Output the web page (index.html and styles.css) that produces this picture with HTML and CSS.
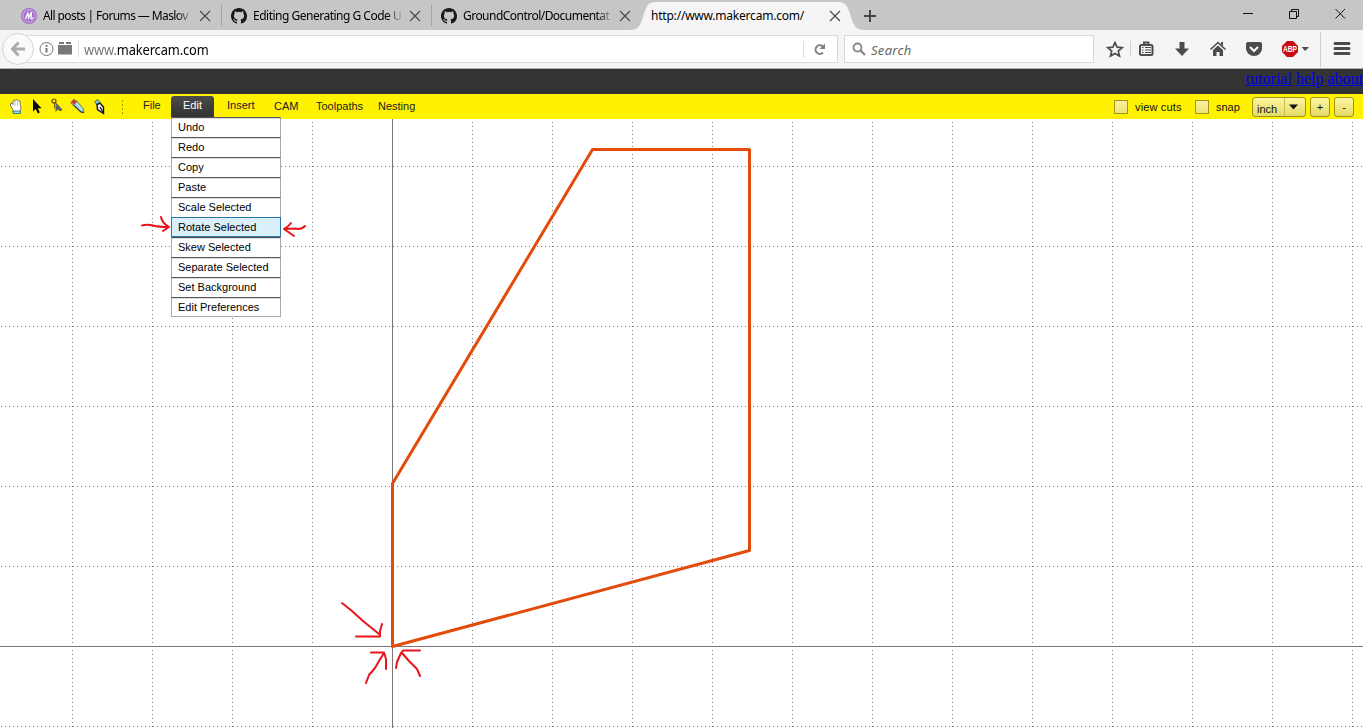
FILE: index.html
```html
<!DOCTYPE html>
<html lang="en">
<head>
<meta charset="utf-8">
<title>MakerCAM</title>
<link rel="stylesheet" href="styles.css">
</head>
<body>
<svg class="defs" width="0" height="0">
  <symbol id="x" viewBox="0 0 12 12"><path d="M1 1L11 11M11 1L1 11" stroke="#444" stroke-width="1.1" fill="none"/></symbol>
  <symbol id="gh" viewBox="0 0 16 16"><path fill="#191717" d="M8 0C3.58 0 0 3.58 0 8c0 3.54 2.29 6.53 5.47 7.59.4.07.55-.17.55-.38 0-.19-.01-.82-.01-1.49-2.01.37-2.53-.49-2.69-.94-.09-.23-.48-.94-.82-1.13-.28-.15-.68-.52-.01-.53.63-.01 1.08.58 1.23.82.72 1.21 1.87.87 2.33.66.07-.52.28-.87.51-1.07-1.78-.2-3.64-.89-3.64-3.95 0-.87.31-1.59.82-2.15-.08-.2-.36-1.02.08-2.12 0 0 .67-.21 2.2.82a7.6 7.6 0 0 1 4 0c1.53-1.04 2.2-.82 2.2-.82.44 1.1.16 1.92.08 2.12.51.56.82 1.27.82 2.15 0 3.07-1.87 3.75-3.65 3.95.29.25.54.73.54 1.48 0 1.07-.01 1.93-.01 2.2 0 .21.15.46.55.38A8 8 0 0 0 16 8c0-4.42-3.58-8-8-8z"/></symbol>
</svg>
<header class="tabs">
  <div class="tab tab-first">
    <svg width="16" height="16" viewBox="0 0 16 16"><circle cx="8" cy="8" r="8" fill="#a66fcb"/><circle cx="8" cy="8" r="6.2" fill="none" stroke="#dcc5eb" stroke-width=".8"/><path d="M4.500 11L7 4.500L7.500 10L10.500 4L10 10.500Q11 11.500 12 9.500" fill="none" stroke="#fff" stroke-width="1.300"/></svg>
    <span class="label t1">All posts | Forums — Maslov</span><svg class="close" width="12" height="12"><use href="#x"/></svg>
  </div>
  <div class="tab">
    <svg width="16" height="16"><use href="#gh"/></svg>
    <span class="label t2">Editing Generating G Code U</span><svg class="close" width="12" height="12"><use href="#x"/></svg>
  </div>
  <div class="tab">
    <svg width="16" height="16"><use href="#gh"/></svg>
    <span class="label t3">GroundControl/Documentat</span><svg class="close" width="12" height="12"><use href="#x"/></svg>
  </div>
  <div class="active">
    <svg class="shape" width="234" height="30" viewBox="0 0 234 30"><path d="M0 30C8 30 10 26 13 17C16 7 18 2 25 2H209C216 2 218 7 221 17C224 26 226 30 234 30Z" fill="#f5f5f5"/></svg>
    <span class="label t4">http://www.makercam.com/</span><svg class="close" width="12" height="12"><use href="#x"/></svg>
  </div>
  <svg class="plus" width="12" height="12"><path d="M6 0V12M0 6H12" stroke="#444" stroke-width="2"/></svg>
  <svg class="win" width="110" height="16" viewBox="0 0 110 16"><path d="M0 6.500H10" stroke="#111"/><path d="M46.500 4.500h7v7h-7zM48.500 4.500v-2h7v7h-2" fill="none" stroke="#111"/><path d="M92.500 2L102 11.500M102 2L92.500 11.500" stroke="#111"/></svg>
</header>
<nav class="nav">
  <div class="url">
    <svg width="67" height="27" viewBox="-5 0 67 27"><circle cx="24.500" cy="13" r="6.500" fill="none" stroke="#777"/><path d="M24.500 12v4.500M24.500 9v1.800" stroke="#666" stroke-width="1.800"/><path d="M36 9h14v9.500h-14zM37 6h5v2h-5zM44 6h5v2h-5z" fill="#777"/><path d="M56.500 4v17" stroke="#ddd"/></svg>
    <span class="addr"><i>www.</i>makercam.com</span>
    <svg class="reload" width="34" height="25" viewBox="0 0 34 25"><path d="M.5 4v17" stroke="#ddd"/><path d="M19.500 9.200A4.300 4.300 0 1 0 20 15.500" fill="none" stroke="#808080" stroke-width="2"/><path d="M22 6.500v5.500h-5.500z" fill="#808080"/></svg>
  </div>
  <svg class="back" width="34" height="34" viewBox="0 0 34 34"><circle cx="17" cy="17" r="15.500" fill="#fafafa" stroke="#d4d4d4"/><path d="M11.500 17H24M17.500 10.500L11.500 17L17.500 23.500" fill="none" stroke="#ababab" stroke-width="3"/></svg>
  <div class="search"><svg width="14" height="14" viewBox="0 0 14 14"><circle cx="5.500" cy="5.500" r="4" fill="none" stroke="#868686" stroke-width="1.800"/><path d="M8.500 8.500L13 13" stroke="#868686" stroke-width="2.300"/></svg><span>Search</span></div>
  <svg class="tools" width="269" height="38" viewBox="1094 30 269 38">
    <path d="M1115 42.500l2.100 4.700 5.100.5-3.900 3.400 1.200 5-4.500-2.600-4.500 2.600 1.200-5-3.900-3.400 5.100-.5z" fill="none" stroke="#4c4c4c" stroke-width="1.700"/>
    <path d="M1130.500 41v15M1320.500 32v35" stroke="#d0d0d0"/>
    <rect x="1140" y="45" width="12.500" height="10" rx="1.500" fill="none" stroke="#4c4c4c" stroke-width="2"/><path d="M1144 45V42.500h4.500V45" fill="none" stroke="#4c4c4c" stroke-width="2"/><path d="M1142 47.500h1.500M1142 50h1.500M1142 52.500h1.500M1145 47.500h6M1145 50h6M1145 52.500h6" stroke="#4c4c4c" stroke-width="1.200"/>
    <path d="M1179.500 42h5v6.500h4.500l-7 7.500-7-7.500h4.500z" fill="#4c4c4c"/>
    <path d="M1210.500 49.500L1218 42.500L1225.500 49.500" fill="none" stroke="#4c4c4c" stroke-width="1.600"/><path d="M1213 50l5-4.500 5 4.500v6h-3.500v-4h-3v4h-3.500zM1221 42h2v4l-2-1.500z" fill="#4c4c4c"/>
    <path d="M1248 42h12q2 0 2 2v4.500a8 7.500 0 0 1-16 0V44q0-2 2-2z" fill="#4c4c4c"/><path d="M1250 47l4 4 4-4" fill="none" stroke="#fff" stroke-width="2"/>
    <path d="M1287 41h6l5 5v6l-5 5h-6l-5-5v-6z" fill="#c70d12"/><text class="abp" x="1283" y="52" textLength="14" lengthAdjust="spacingAndGlyphs">ABP</text>
    <path d="M1301.500 47h7.500l-3.750 4z" fill="#4c4c4c"/>
    <path d="M1335 43.500h14M1335 48.500h14M1335 53.500h14" stroke="#4c4c4c" stroke-width="3" stroke-linecap="round"/>
  </svg>
</nav>
<div class="links"><a href="#">tutorial</a> <a href="#">help</a> <a href="#">about</a></div>
<div class="bar">
  <svg class="icons" width="130" height="25" viewBox="0 94 130 25">
    <path d="M13 112v-2.500l-2.500-3.500v-2.500l1.500-.5 1 1.500v-3.500l1.500-1 1 .5 1.500-1 1.500 1 1.500.5.500 5.500.5 2-1 3v1z" fill="#fff" stroke="#6c6a58" stroke-width=".9"/><path d="M13 111h7.500v2.500H13z" fill="#7fe0ea" stroke="#367" stroke-width=".8"/><path d="M15 101v5M17.500 101v5" stroke="#aaa" stroke-width=".7"/>
    <path d="M33 99v12.500l2.800-2.500 2 4.500 2-1-2-4.300H41.500z" fill="#080808"/>
    <path d="M54.500 102v6.500M54.500 102l5 5" stroke="#776600"/><path d="M55.500 102.500v9.500l2.500-2.500 1.500 1.500h2.500v-2z" fill="#666"/><circle cx="54" cy="101" r="2" fill="#ffe000" stroke="#5b5200" stroke-width="1.200"/>
    <path d="M71 102l2.500-2.500 3 1 7 8.500.5 3.500-3.500-.5-9-8z" fill="#8ed0da" stroke="#444" stroke-width=".6"/><path d="M76.500 103.500l5.500 6" stroke="#fff" stroke-width="1"/><path d="M71.500 102l2-2.200 3.500 2-3.200 3.200z" fill="#d5342b"/><path d="M73.500 105l7.500 7 3 .5" fill="none" stroke="#222" stroke-width="1"/>
    <path d="M94.500 102l3-2.500 2.500 3-2.500 2.500z" fill="#6fd1dd" stroke="#345" stroke-width=".8"/><path d="M97 104.500l3-1.500 3.500 4v6.500l-6-4z" fill="#eee" stroke="#111" stroke-width="1.400"/><path d="M100 107l3.500 6" stroke="#111" stroke-width="1.200"/>
    <path d="M122.500 100v14" stroke="#aa9c00" stroke-dasharray="2 2"/>
  </svg>
  <span class="m file">File</span><span class="m edit">Edit</span><span class="m insert">Insert</span><span class="m cam">CAM</span><span class="m tp">Toolpaths</span><span class="m nest">Nesting</span>
  <div class="opts">
    <b class="check"></b><span class="vc">view cuts</span><b class="check"></b><span class="snap">snap</span>
    <div class="combo"><span>inch</span><svg width="21" height="18"><path d="M.5 0v18" stroke="#c9bd5e"/><path d="M5 6.500h9l-4.500 5z" fill="#111"/></svg></div>
    <b class="btn">+</b><b class="btn">-</b>
  </div>
</div>
<main class="stage">
  <svg class="drawing" width="1363" height="609" viewBox="0 119 1363 609">
    <defs>
      <pattern id="v" x="72" y="120" width="80" height="4" patternUnits="userSpaceOnUse"><rect y="2" width="1" height="1" fill="#777"/></pattern>
      <pattern id="h" x="0" y="166" width="4" height="80" patternUnits="userSpaceOnUse"><rect x="1" width="1" height="1" fill="#777"/></pattern>
    </defs>
    <rect y="119" width="1363" height="609" fill="url(#v)"/><rect y="119" width="1363" height="609" fill="url(#h)"/>
    <path d="M392.500 119V728M0 646.500H1363" stroke="#777"/>
    <path d="M392.500 646.500V483.500L592.500 149.500H749.500V550.500Z" fill="none" stroke="#e24b0c" stroke-width="3" stroke-linejoin="round"/>
    <g fill="none" stroke="#e8151b" stroke-width="2" stroke-linecap="round" stroke-linejoin="round">
      <path d="M142 225.500Q147 224 153 225.500T169 227M161 217Q162 223 169 227L163 231"/>
      <path d="M305 226Q301 230 295 228.500L285 229M291 223Q288 227 284 229L294 236"/>
      <path d="M342 603L352 611L363 621L379 634M356 636.500H380V631L382 624"/>
      <path d="M371 652.500H384L386 659V669M384 653L379 661L375 668L369 675L366 683"/>
      <path d="M420 650.500H403L401 653L397 662L396 668M402 653L409 661L417 669L420 676"/>
    </g>
  </svg>
  <ul class="menu"><li>Undo</li><li>Redo</li><li>Copy</li><li>Paste</li><li>Scale Selected</li><li class="on">Rotate Selected</li><li>Skew Selected</li><li>Separate Selected</li><li>Set Background</li><li>Edit Preferences</li></ul>
</main>
</body>
</html>
```
FILE: styles.css
```css
* { box-sizing: border-box; }
body { margin: 0; width: 1363px; height: 728px; overflow: hidden; background: #fff; font-family: "Liberation Sans", Arial, sans-serif; display: flex; flex-direction: column; }
svg { display: block; flex: none; }
.defs { position: absolute; }
.tabs { height: 30px; background: #c6c6c6; display: flex; font: 12px "Noto Sans", sans-serif; color: #000; flex: none; }
.tab { width: 210px; height: 30px; padding: 2px 11px 0 9px; display: flex; align-items: center; position: relative; }
.tab-first { width: 222px; padding-left: 21px; }
.tab:nth-child(-n+2)::after { content: ""; position: absolute; right: 0; top: 5px; height: 21px; width: 1px; background: #a4a4a4; }
.label { white-space: nowrap; width: 150px; margin-left: 6px; line-height: 20px; }
.tab .label { -webkit-mask-image: linear-gradient(90deg, #000 134px, transparent 151px); mask-image: linear-gradient(90deg, #000 134px, transparent 151px); }
.t1 { letter-spacing: -.6px; }
.t2 { letter-spacing: -.5px; }
.t3 { letter-spacing: -.53px; }
.t4 { letter-spacing: -.21px; }
.close { margin-left: auto; }
.active { width: 234px; margin-left: -12px; display: flex; align-items: center; padding: 2px 23px 0 15px; position: relative; }
.shape { position: absolute; left: 0; top: 0; }
.active .label, .active .close { position: relative; }
.active .label { width: 160px; }
.plus { margin: 10px 0 0 0; }
.win { margin: 7px 10px 0 auto; }
.nav { height: 39px; flex: none; background: #f5f5f5; border-bottom: 1px solid #b0b0b0; display: flex; align-items: center; position: relative; font-family: "Noto Sans", sans-serif; }
.url { width: 822px; margin-left: 16px; height: 28px; border: 1px solid #d9d9d9; background: #fff; display: flex; align-items: center; }
.back { position: absolute; left: 1px; top: 2px; }
.addr { font-size: 13.500px; letter-spacing: -.1px; line-height: 20px; padding-top: 1px; transform: scaleX(.95); transform-origin: 0 50%; }
.addr i { font-style: normal; color: #777; }
.reload { margin-left: auto; }
.search { width: 250px; margin-left: 6px; height: 28px; border: 1px solid #d9d9d9; background: #fff; display: flex; align-items: center; padding-left: 7px; font-size: 13px; font-style: italic; color: #666; gap: 5px; }
.search span { letter-spacing: .3px; padding-top: 1px; }
.abp { font: bold 8.500px "Liberation Sans", sans-serif; fill: #fff; }
.links { height: 25px; flex: none; background: #333; text-align: right; font: 16px/20px "Liberation Serif", serif; white-space: nowrap; }
.links a { color: #0000ee; }
.bar { height: 25px; flex: none; background: #fff200; display: flex; font-size: 11px; color: #222; }
.m { line-height: 24px; white-space: nowrap; }
.file, .insert { line-height: 23px; }
.file { margin-left: 13px; width: 28px; }
.edit { width: 43px; height: 23px; margin-top: 2px; line-height: 19px; border-radius: 3px 3px 0 0; background: linear-gradient(#4b4b4b, #303030); color: #fff; text-align: center; }
.insert { margin-left: 13px; width: 47px; }
.cam { width: 42px; } .tp { width: 62px; }
.opts { margin-left: auto; padding-right: 9px; padding-top: 1px; display: flex; align-items: center; color: #111; }
.check { width: 14px; height: 14px; border: 1px solid #a19419; background: linear-gradient(#f8f0a0, #efe477); }
.vc { margin-left: 7px; width: 60px; letter-spacing: .15px; } .snap { margin-left: 7px; width: 36px; }
.combo, .btn { height: 20px; border: 1px solid #a09317; border-radius: 3px; background: linear-gradient(#fbf5a0, #e5da68); color: #111; }
.combo { width: 54px; display: flex; justify-content: space-between; line-height: 22px; padding-left: 4px; }
.btn { width: 20px; margin-left: 4px; text-align: center; line-height: 18px; font-weight: normal; }
.stage { height: 609px; flex: none; position: relative; }
.menu { position: absolute; left: 171px; top: -2px; width: 110px; margin: 0; padding: 0; list-style: none; background: #fff; font-size: 11px; color: #000; }
.menu li { height: 20px; line-height: 19px; padding-left: 6px; border: 1px solid #aaa; border-top-color: #555; border-bottom: 0; box-shadow: inset 0 1px #ddd; }
.menu li:last-child { border-bottom: 1px solid #aaa; }
.menu .on { background: #d9f0fb; border: 1px solid #2475ac; box-shadow: none; }
```
